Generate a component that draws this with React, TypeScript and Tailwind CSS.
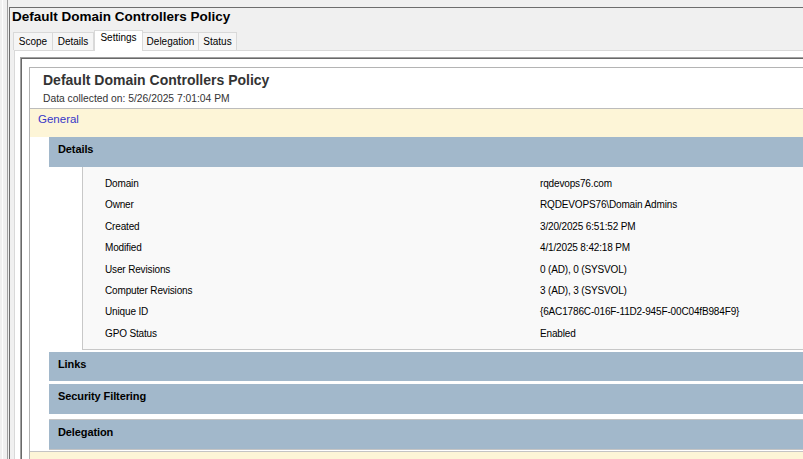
import React from 'react';

// Rapport GPMC : onglet Settings d'une GPO
const rows: [string, string][] = [
  ['Domain', 'rqdevops76.com'],
  ['Owner', 'RQDEVOPS76\\Domain Admins'],
  ['Created', '3/20/2025 6:51:52 PM'],
  ['Modified', '4/1/2025 8:42:18 PM'],
  ['User Revisions', '0 (AD), 0 (SYSVOL)'],
  ['Computer Revisions', '3 (AD), 3 (SYSVOL)'],
  ['Unique ID', '{6AC1786C-016F-11D2-945F-00C04fB984F9}'],
  ['GPO Status', 'Enabled'],
];

const tabs = [
  { label: 'Scope', w: 'w-[40px]' },
  { label: 'Details', w: 'w-[41px]' },
  { label: 'Settings', w: 'w-[49px]', active: true },
  { label: 'Delegation', w: 'w-[56px]' },
  { label: 'Status', w: 'w-[38px]' },
];

function Band({ title, className = '' }: { title: string; className?: string }) {
  return (
    <div className={`h-[29px] shrink-0 bg-[#a2b8cb] pl-[9px] pt-[2px] text-[11px] font-bold leading-[20px] tracking-[-0.1px] text-black ${className}`}>
      {title}
    </div>
  );
}

export default function App() {
  return (
    <div className="flex h-[459px] w-[803px] overflow-hidden bg-[#f0f0f0] font-['Liberation_Sans',Arial,sans-serif] text-black">
      {/* Séparateur du volet gauche */}
      <div className="h-full w-[8px] shrink-0 border-r border-[#a0a0a0] pl-[2px]">
        <div className="h-full border-l border-[#fdfdfd]"></div>
      </div>

      <div className="mt-[7px] ml-[1px] flex min-w-0 flex-1 flex-col border-l border-t border-[#6d6d6d]">
        <div className="h-[22px] shrink-0 pl-[2px] text-[13.5px] font-bold leading-[18px]">Default Domain Controllers Policy</div>

        {/* Onglets */}
        <div className="flex h-[20px] shrink-0 items-end pl-[3px]">
          {tabs.map((t, i) =>
            t.active ? (
              <div
                key={t.label}
                className={`${t.w} relative z-10 -mb-px h-[21px] border border-b-0 border-[#d9d9d9] bg-white text-center text-[10px] leading-[13px]`}
              >
                {t.label}
              </div>
            ) : (
              <div
                key={t.label}
                className={`${t.w} h-[18px] border-t border-r border-[#d9d9d9] bg-[#f5f5f5] text-center text-[10px] leading-[18px] ${i === 0 ? 'border-l' : ''}`}
              >
                {t.label}
              </div>
            ),
          )}
        </div>

        <div className="ml-[4px] flex flex-1 flex-col border-l border-t border-[#d9d9d9] bg-white pl-[5px] pt-[6px]">
          {/* Contrôle navigateur */}
          <div className="flex flex-1 flex-col border-l border-t border-[#a0a0a0]">
            <div className="flex flex-1 flex-col border-l border-t border-[#696969] pl-[7px] pt-[8px]">
              <div className="flex flex-1 flex-col border-l border-t border-[#b4b4b4] bg-white">
                <div className="h-[41px] shrink-0 border-b border-[#bcbcbc] pl-[13px] pt-[2px]">
                  <div className="text-[14px] font-bold leading-[20px] text-[#333333]">Default Domain Controllers Policy</div>
                  <div className="mt-[1px] text-[10.3px] leading-[15px] text-[#333333]">Data collected on: 5/26/2025 7:01:04 PM</div>
                </div>

                <div className="h-[28px] shrink-0 bg-[#fdf5d7] pl-[8px] text-[11.5px] leading-[20px] text-[#3737c8]">General</div>

                <div className="ml-[19px] flex shrink-0 flex-col">
                  <Band title="Details" className="h-[30px]" />
                  <div className="ml-[33px] border-b border-l border-[#c8c8c8] bg-[#f9f9f9] pb-[5px] pt-[6px]">
                    <div className="grid grid-cols-[435px_1fr] pl-[22px] text-[10px] leading-[21.4px] tracking-[-0.15px]">
                      {rows.map(([k, v]) => (
                        <React.Fragment key={k}>
                          <div>{k}</div>
                          <div className="whitespace-nowrap">{v}</div>
                        </React.Fragment>
                      ))}
                    </div>
                  </div>
                  <Band title="Links" className="mt-[2px]" />
                  <Band title="Security Filtering" className="mt-[3px] h-[30px]" />
                  <div className="mt-[5px] border-y border-[#c4c4c4]">
                    <Band title="Delegation" />
                  </div>
                </div>

                <div className="mt-px h-[20px] shrink-0 border-t border-[#c4c4c4] bg-[#fdf5d7]"></div>
              </div>
            </div>
          </div>
        </div>
      </div>
    </div>
  );
}
